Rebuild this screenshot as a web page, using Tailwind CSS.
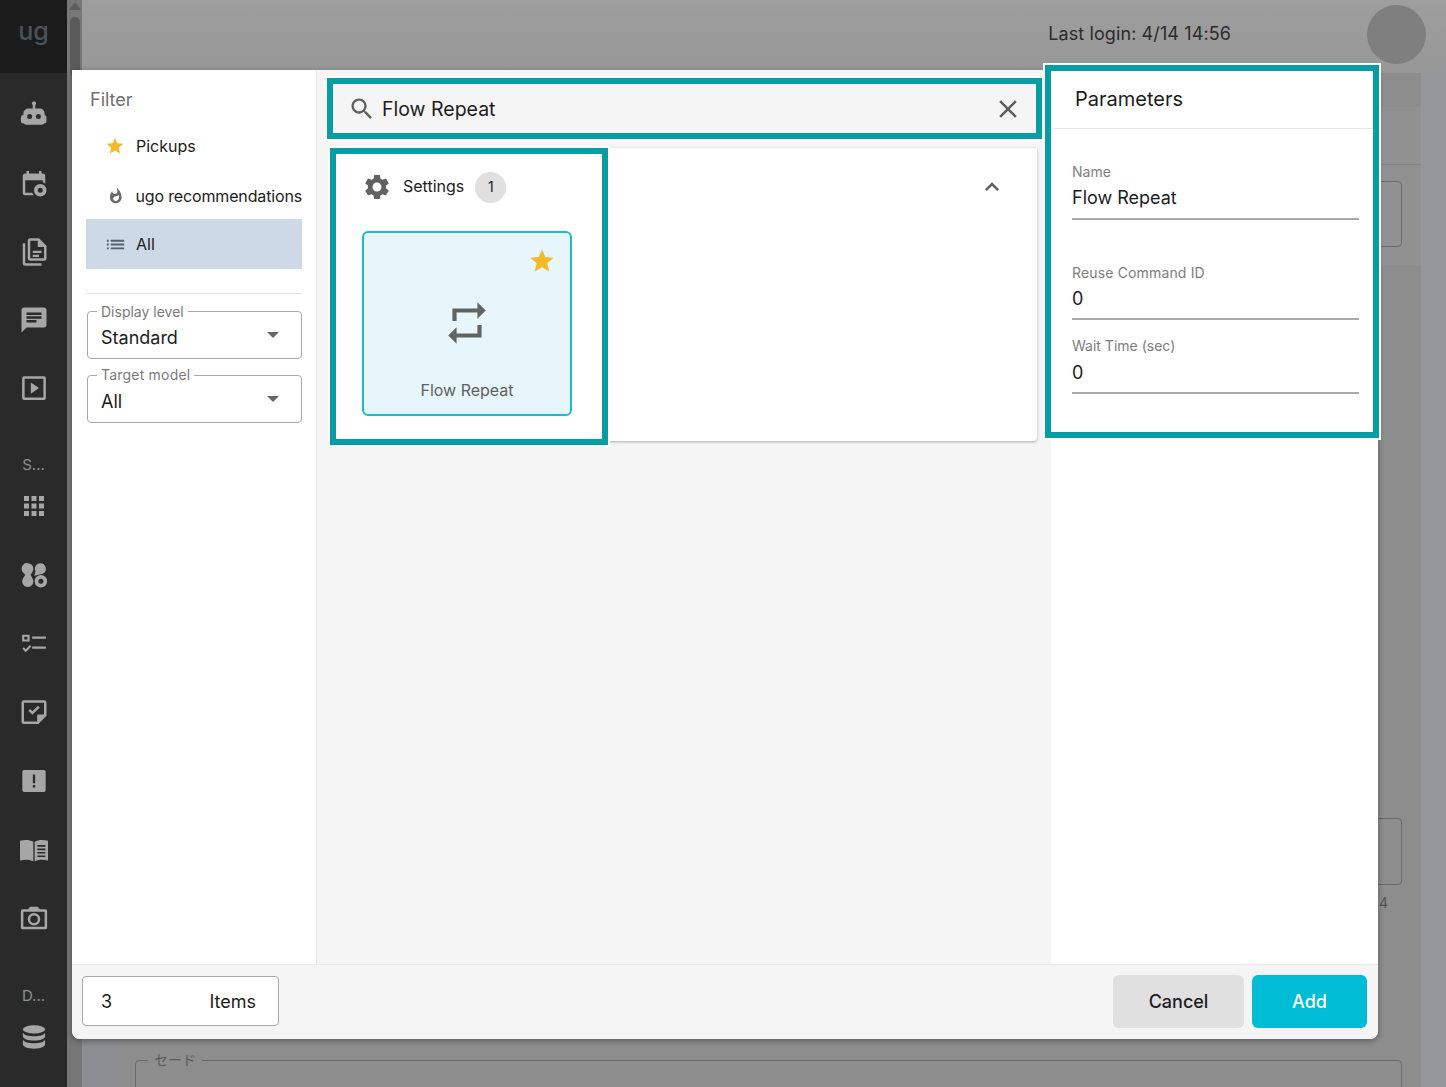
<!DOCTYPE html>
<html lang="en">
<head>
<meta charset="UTF-8">
<meta name="viewport" content="width=device-width, initial-scale=1.0">
<title>Add command</title>
<script src="https://cdn.jsdelivr.net/npm/@tailwindcss/browser@4"></script>
</head>
<body class="h-[1087px] w-[1446px] overflow-hidden bg-[#8d8d8d] font-['Inter','Noto_Sans_CJK_JP',sans-serif] text-[#1c1c1c]">

<!-- page behind the dialog -->
<div class="flex h-full">
  <aside class="flex h-full w-[67px] shrink-0 flex-col items-center bg-[#2a2a2a] text-[#a6a6a6]">
    <div class="flex h-[73px] w-full shrink-0 items-center justify-center bg-[#1b1b1b] pb-[10px] text-[25px] font-medium text-[#47525c]">ug</div>
    <div class="h-[9px] shrink-0"></div>
    <div class="flex h-[68px] shrink-0 items-center justify-center">
      <svg class="size-[30px]" viewBox="0 0 24 24" fill="currentColor"><path fill-rule="evenodd" d="M11 3.2a1.6 1.6 0 1 1 2 0V6h3.5a4 4 0 0 1 4 4v1.2a2 2 0 0 1 1.5 1.9v2.8a2 2 0 0 1-2 2H20a2 2 0 0 1-2 1.1H6A2 2 0 0 1 4 18H3.5a2 2 0 0 1-2-2v-2.9a2 2 0 0 1 2-1.9V10a4 4 0 0 1 4-4H11zM8.5 10.3a2 2 0 1 0 0 4 2 2 0 0 0 0-4zm7 0a2 2 0 1 0 0 4 2 2 0 0 0 0-4z"/></svg>
    </div>
    <div class="flex h-[68px] shrink-0 items-center justify-center">
      <svg class="size-[30px]" viewBox="0 0 24 24" fill="currentColor"><path fill-rule="evenodd" d="M6 1.5h2v2h8v-2h2v2h1a2 2 0 0 1 2 2v6.2a6 6 0 0 0-2-1.1V9H5v10h5.6a6 6 0 0 0 1.1 2H5a2 2 0 0 1-2-2V5.5a2 2 0 0 1 2-2h1zM17 12a5 5 0 1 1 0 10 5 5 0 0 1 0-10zm0 3a2 2 0 1 0 0 4 2 2 0 0 0 0-4z"/></svg>
    </div>
    <div class="flex h-[68px] shrink-0 items-center justify-center">
      <svg class="size-[30px]" viewBox="0 0 24 24" fill="currentColor"><path d="M16 1H9a2 2 0 0 0-2 2v14a2 2 0 0 0 2 2h11a2 2 0 0 0 2-2V7l-6-6zm4 16H9V3h6v5h5v9zM11 11h7v1.8h-7zm0 3.2h5V16h-5z"/><path d="M5 5H3v16a2 2 0 0 0 2 2h13v-2H5z"/></svg>
    </div>
    <div class="flex h-[68px] shrink-0 items-center justify-center">
      <svg class="size-[30px]" viewBox="0 0 24 24" fill="currentColor"><path d="M20 2H4c-1.1 0-1.99.9-1.99 2L2 22l4-4h14c1.1 0 2-.9 2-2V4c0-1.1-.9-2-2-2zM6 9h12v2H6V9zm8 5H6v-2h8v2zm4-6H6V6h12v2z"/></svg>
    </div>
    <div class="flex h-[68px] shrink-0 items-center justify-center">
      <svg class="size-[30px]" viewBox="0 0 24 24" fill="currentColor"><path fill-rule="evenodd" d="M4 2.5h16A1.5 1.5 0 0 1 21.5 4v16a1.5 1.5 0 0 1-1.5 1.5H4A1.5 1.5 0 0 1 2.5 20V4A1.5 1.5 0 0 1 4 2.5zm.5 2v15h15v-15zM9.5 7.5L16 12l-6.5 4.500z"/></svg>
    </div>
    <div class="flex h-[50px] w-full shrink-0 items-end justify-center text-[15px] leading-[14px] text-[#8f8f8f]">S...</div>
    <div class="flex h-[68.67px] shrink-0 items-center justify-center">
      <svg class="size-[30px]" viewBox="0 0 24 24" fill="currentColor"><path d="M4 8h4V4H4v4zm6 12h4v-4h-4v4zm-6 0h4v-4H4v4zm0-6h4v-4H4v4zm6 0h4v-4h-4v4zm6-10v4h4V4h-4zm-6 4h4V4h-4v4zm6 6h4v-4h-4v4zm0 6h4v-4h-4v4z"/></svg>
    </div>
    <div class="flex h-[68.67px] shrink-0 items-center justify-center">
      <svg class="size-[30px]" viewBox="0 0 24 24" fill="currentColor"><path fill-rule="evenodd" d="M7 2.5A4.5 4.5 0 0 1 11.500 7c0 1-.3 1.800-.8 2.500L9.300 12l1.400 2.500c.5.700.8 1.500.8 2.500a4.500 4.500 0 1 1-8.500-2L5 12 2.500 9A4.500 4.500 0 0 1 7 2.500zm10 0a4.500 4.500 0 0 1 2 8.500l-6.800 1.500 1-3.500A4.500 4.500 0 0 1 17 2.500zM17.500 12a5 5 0 1 1 0 10 5 5 0 0 1 0-10zm0 3a2 2 0 1 0 0 4 2 2 0 0 0 0-4z"/></svg>
    </div>
    <div class="flex h-[68.67px] shrink-0 items-center justify-center">
      <svg class="size-[30px]" viewBox="0 0 24 24" fill="currentColor"><path fill-rule="evenodd" d="M2.5 4.5h6V10h-6zm1.700 1.600v2.300h2.600V6.100zM10.500 6h11v1.700h-11zM10.500 14h11v1.700h-11zM2.700 15.800l1.200-1.200 1.500 1.500 3.300-3.300 1.200 1.200-4.500 4.500z"/></svg>
    </div>
    <div class="flex h-[68.67px] shrink-0 items-center justify-center">
      <svg class="size-[30px]" viewBox="0 0 24 24" fill="currentColor"><path fill-rule="evenodd" d="M4 2.5h16a2 2 0 0 1 2 2V15l-6.500 6.500H4a2 2 0 0 1-2-2v-15a2 2 0 0 1 2-2zm0 2v15h10.500V15a1 1 0 0 1 1-1H20V4.500zM7.500 11l1.400-1.400 1.800 1.800 4.500-4.500 1.400 1.400-5.900 5.900z"/></svg>
    </div>
    <div class="flex h-[68.67px] shrink-0 items-center justify-center">
      <svg class="size-[28px]" viewBox="0 0 24 24" fill="currentColor"><path fill-rule="evenodd" d="M3.5 2.5h17A1.500 1.500 0 0 1 22 4v16a1.500 1.500 0 0 1-1.500 1.500h-17A1.500 1.500 0 0 1 2 20V4a1.500 1.500 0 0 1 1.500-1.500zM11 6.500V14h2V6.500zM11 15.500v2h2v-2z"/></svg>
    </div>
    <div class="flex h-[68.67px] shrink-0 items-center justify-center">
      <svg class="size-[32px]" viewBox="0 0 24 24" fill="currentColor"><path fill-rule="evenodd" d="M1.5 5c3.500-.8 7.500-.8 10 .9v14.600c-2.500-1.500-6.500-1.500-10-.6zM12.500 5.900c2.500-1.700 6.500-1.700 10-.9v14.900c-3.500-.9-7.500-.9-10 .6zm2 2.400v1.200h6V8.300zm0 2.600v1.200h6v-1.200zm0 2.600v1.200h6v-1.200zm0 2.600v1.200h6v-1.200z"/></svg>
    </div>
    <div class="flex h-[68.67px] shrink-0 items-center justify-center">
      <svg class="size-[30px]" viewBox="0 0 24 24" fill="currentColor"><path fill-rule="evenodd" d="M9 3h6l1.800 2H21a1.500 1.500 0 0 1 1.500 1.500v13A1.500 1.500 0 0 1 21 21H3a1.500 1.500 0 0 1-1.500-1.500v-13A1.500 1.500 0 0 1 3 5h4.200zM3.500 7v12h17V7zM12 8a5 5 0 1 1 0 10 5 5 0 0 1 0-10zm0 2a3 3 0 1 0 0 6 3 3 0 0 0 0-6z"/></svg>
    </div>
    <div class="flex h-[50px] w-full shrink-0 items-end justify-center text-[15px] leading-[14px] text-[#8f8f8f]">D...</div>
    <div class="flex h-[68px] shrink-0 items-center justify-center">
      <svg class="size-[28px]" viewBox="0 0 24 24" fill="currentColor"><ellipse cx="12" cy="5.5" rx="9.5" ry="3.5"/><path d="M2.5 8.300c1 2 5 3 9.500 3s8.500-1 9.500-3v3.200c0 2-4.300 3.500-9.500 3.500s-9.500-1.500-9.500-3.500zM2.500 14.300c1 2 5 3 9.500 3s8.500-1 9.500-3v4.200c0 2-4.300 3.500-9.500 3.500s-9.500-1.500-9.500-3.500z"/></svg>
    </div>
  </aside>

  <div class="flex h-full w-[15px] shrink-0 flex-col items-center bg-[#777777]">
    <div class="mt-0.5 size-0 border-x-[6px] border-b-[8px] border-x-transparent border-b-[#5d5d5d]"></div>
    <div class="mt-[7px] h-[60px] w-[10px] rounded-full bg-[#5a5a5a]"></div>
  </div>

  <main class="flex h-full min-w-0 flex-1 flex-col">
    <header class="flex h-[73px] shrink-0 items-center justify-end gap-[136px] bg-linear-to-b from-[#9e9e9e] to-[#979797] pr-5 pb-[5px]">
      <span class="pb-px text-[18px] tracking-[0.1px] text-[#2b2b2b]">Last login: 4/14 14:56</span>
      <span class="size-[59px] rounded-full bg-[#7f7f7f]"></span>
    </header>
    <div class="flex min-h-0 flex-1 bg-[#8a8e92] pl-[33px]">
      <div class="flex min-w-0 flex-1 flex-col bg-[#8d8d8d] pt-[34px]">
        <div class="h-[58px] shrink-0 border-b border-[#858585] bg-[#919191]"></div>
        <div class="h-[100px] shrink-0 bg-[#919191] py-4 pr-[19px]">
          <div class="ml-auto h-[66px] w-[400px] rounded border border-[#6a6a6a]"></div>
        </div>
        <div class="h-[523px] shrink-0"></div>
        <div class="shrink-0 pt-[30px] pr-[19px]">
          <div class="ml-auto h-[67px] w-[400px] rounded border border-[#6a6a6a]"></div>
          <div class="mt-2 mr-[14px] text-right text-sm leading-5 text-[#555555]">4</div>
        </div>
        <div class="relative mt-[147px] mr-[19px] ml-5 h-[60px] shrink-0 rounded-t border border-[#6a6a6a]">
          <span class="absolute -top-[11px] left-3 bg-[#8d8d8d] px-1.5 text-sm leading-5 text-[#5c5c5c]">セード</span>
        </div>
      </div>
      <div class="w-[25px] shrink-0 bg-[#94979b]"></div>
    </div>
  </main>
</div>

<!-- dialog -->
<div class="absolute top-[70px] left-[72px] flex h-[969px] w-[1306px] flex-col overflow-hidden rounded-b-lg bg-white shadow-[0_2px_6px_rgba(0,0,0,0.35)]">
  <div class="flex min-h-0 flex-1">
    <aside class="flex w-[245px] shrink-0 flex-col border-r border-[#e6e6e6] px-[14px]">
      <div class="flex h-[58px] shrink-0 items-center pt-px pl-1 text-[18px] text-[#6f6f6f]">Filter</div>
      <div class="flex h-[36px] shrink-0 items-center gap-[11px] pl-[19px] text-[16px]">
        <svg class="size-[20px] text-[#f6b92b]" viewBox="0 0 24 24" fill="currentColor"><path d="M12 17.270L18.180 21l-1.640-7.030L22 9.240l-7.190-.61L12 2 9.190 8.630 2 9.240l5.460 4.730L5.820 21z"/></svg>
        <span>Pickups</span>
      </div>
      <div class="flex h-[50px] shrink-0 items-center whitespace-nowrap pt-[14px] pl-[21px] text-[16px]">
        <svg class="size-[18px] text-[#6a6a6a]" viewBox="0 0 24 24" fill="currentColor"><path d="M13.500.67s.74 2.650.74 4.800c0 2.060-1.350 3.730-3.410 3.730-2.070 0-3.630-1.670-3.630-3.730l.03-.36C5.210 7.510 4 10.620 4 14c0 4.420 3.580 8 8 8s8-3.580 8-8C20 8.610 17.410 3.800 13.500.67zM11.710 19c-1.780 0-3.220-1.400-3.220-3.140 0-1.620 1.050-2.760 2.810-3.120 1.770-.36 3.600-1.210 4.620-2.580.39 1.290.59 2.650.59 4.040 0 2.650-2.150 4.800-4.800 4.800z"/></svg>
        <span class="ml-[11px] tracking-[-0.15px]">ugo recommendations</span>
      </div>
      <div class="mt-[5px] flex h-[50px] shrink-0 items-center gap-[9px] bg-[#cdd9e6] pl-[18px] text-[16px]">
        <svg class="size-[23px] text-[#5a5f66]" viewBox="0 0 24 24" fill="currentColor"><path d="M3 13h2v-2H3v2zm0 4h2v-2H3v2zm0-8h2V7H3v2zm4 4h14v-2H7v2zm0 4h14v-2H7v2zM7 7v2h14V7H7z"/></svg>
        <span>All</span>
      </div>
      <div class="mt-6 h-px shrink-0 bg-[#e3e3e3]"></div>
      <div class="relative mt-[17px] ml-px flex h-[48px] shrink-0 items-center justify-between rounded border border-[#a8a8a8] pr-[22px] pl-[13px] text-[18px]">
        <span class="absolute -top-[9px] left-[9px] bg-white px-1 text-[14px] leading-[18px] text-[#7a7a7a]">Display level</span>
        <span class="pt-1">Standard</span>
        <span class="size-0 border-x-[6px] border-t-[6px] border-x-transparent border-t-[#666666]"></span>
      </div>
      <div class="relative mt-[16px] ml-px flex h-[48px] shrink-0 items-center justify-between rounded border border-[#a8a8a8] pr-[22px] pl-[13px] text-[18px]">
        <span class="absolute -top-[10px] left-[9px] bg-white px-1 text-[14px] leading-[18px] tracking-[0.2px] text-[#7a7a7a]">Target model</span>
        <span class="pt-1">All</span>
        <span class="size-0 border-x-[6px] border-t-[6px] border-x-transparent border-t-[#666666]"></span>
      </div>
    </aside>

    <section class="flex min-w-0 flex-1 flex-col bg-[#f5f5f5] pt-4 pr-[14px] pl-[18px]">
      <div class="flex h-[45px] shrink-0 items-center pr-[14px] pl-[13px] text-[19.5px]">
        <svg class="size-[28px] text-[#5f5f5f]" viewBox="0 0 24 24" fill="currentColor"><path d="M15.500 14h-.79l-.28-.27C15.410 12.590 16 11.110 16 9.500 16 5.910 13.090 3 9.500 3S3 5.910 3 9.500 5.910 16 9.500 16c1.610 0 3.090-.59 4.230-1.570l.27.28v.79l5 4.990L20.490 19l-4.990-5zm-6 0C7.010 14 5 11.990 5 9.500S7.010 5 9.500 5 14 7.010 14 9.500 11.990 14 9.500 14z"/></svg>
        <span class="ml-[6px] flex-1 pt-0.5">Flow Repeat</span>
        <svg class="size-[30px] text-[#5f5f5f]" viewBox="0 0 24 24" fill="currentColor"><path d="M19 6.410L17.590 5 12 10.590 6.410 5 5 6.410 10.590 12 5 17.590 6.410 19 12 13.410 17.590 19 19 17.590 13.410 12z"/></svg>
      </div>
      <div class="mt-[17px] h-[293px] shrink-0 rounded-b bg-white pt-[17px] pr-[31px] pl-[27px] shadow-[0_1px_3px_rgba(0,0,0,0.3)]">
        <div class="flex h-[44px] items-center">
          <svg class="size-[30px] text-[#616161]" viewBox="0 0 24 24" fill="currentColor"><path d="M19.140 12.940c.04-.3.06-.61.06-.94 0-.32-.02-.64-.07-.94l2.030-1.580c.18-.14.23-.41.12-.61l-1.920-3.320c-.12-.22-.37-.29-.59-.22l-2.390.96c-.5-.38-1.030-.7-1.620-.94l-.36-2.540c-.04-.24-.24-.41-.48-.41h-3.840c-.24 0-.43.17-.47.41l-.36 2.540c-.59.24-1.130.57-1.620.94l-2.390-.96c-.22-.08-.47 0-.59.22L2.740 8.870c-.12.21-.08.47.12.61l2.030 1.580c-.05.3-.09.63-.09.94s.02.64.07.94l-2.030 1.580c-.18.14-.23.41-.12.61l1.920 3.320c.12.22.37.29.59.22l2.390-.96c.5.38 1.030.7 1.620.94l.36 2.540c.05.24.24.41.48.41h3.840c.24 0 .44-.17.47-.41l.36-2.540c.59-.24 1.130-.56 1.620-.94l2.390.96c.22.08.47 0 .59-.22l1.920-3.320c.12-.22.07-.47-.12-.61l-2.010-1.580zM12 15.600c-1.980 0-3.600-1.620-3.600-3.600s1.620-3.600 3.600-3.600 3.600 1.620 3.600 3.600-1.620 3.600-3.600 3.600z"/></svg>
          <span class="ml-[11px] pb-0.5 text-[16px]">Settings</span>
          <span class="ml-[11px] flex size-[31px] items-center justify-center rounded-full bg-[#e0e0e0] pb-0.5 text-[14px]">1</span>
          <svg class="ml-auto size-[28px] text-[#5f5f5f]" viewBox="0 0 24 24" fill="currentColor"><path d="M12 8l-6 6 1.410 1.410L12 10.830l4.590 4.580L18 14z"/></svg>
        </div>
        <div class="relative mt-[22px] flex h-[185px] w-[210px] flex-col items-center rounded-md border-2 border-[#19bdd3] bg-[#e6f6fa]">
          <svg class="absolute top-[14px] right-[14px] size-[28px] text-[#f6b92b]" viewBox="0 0 24 24" fill="currentColor"><path d="M12 17.270L18.180 21l-1.640-7.030L22 9.240l-7.190-.61L12 2 9.190 8.630 2 9.240l5.460 4.730L5.820 21z"/></svg>
          <svg class="mt-[65px] size-[50px] text-[#636363]" viewBox="0 0 24 24" fill="currentColor"><path d="M7 7h10v3l4-4-4-4v3H5v6h2V7zm10 10H7v-3l-4 4 4 4v-3h12v-6h-2v4z"/></svg>
          <span class="mt-[30px] text-[16px] text-[#5f5f5f]">Flow Repeat</span>
        </div>
      </div>
    </section>

    <section class="w-[327px] shrink-0 bg-white">
      <div class="mx-[2px] flex h-[59px] items-center border-b border-[#e6e6e6] pl-[22px] text-[20px]">Parameters</div>
      <div class="pr-[19px] pl-[21px]">
        <div class="mt-[34px] text-[14px] leading-[18px] text-[#7d7d7d]">Name</div>
        <div class="mt-[5px] h-[34px] border-b-2 border-[#a9a9a9] text-[18px] leading-[24px]">Flow Repeat</div>
        <div class="mt-[44px] text-[14px] leading-[18px] tracking-[0.15px] text-[#7d7d7d]">Reuse Command ID</div>
        <div class="mt-[5px] h-[33px] border-b-2 border-[#a9a9a9] text-[18px] leading-[24px]">0</div>
        <div class="mt-[17px] text-[14px] leading-[18px] text-[#7d7d7d]">Wait Time (sec)</div>
        <div class="mt-[6px] h-[33px] border-b-2 border-[#a9a9a9] text-[18px] leading-[24px]">0</div>
      </div>
    </section>
  </div>

  <footer class="flex h-[75px] shrink-0 items-center justify-between border-t border-[#e8e8e8] bg-[#f5f5f5] px-[11px] pb-[2px]">
    <div class="-ml-px flex h-[50px] w-[197px] items-center justify-between rounded border border-[#a8a8a8] bg-white pr-[22px] pl-[18px] text-[18px]">
      <span>3</span><span>Items</span>
    </div>
    <div class="flex gap-2">
      <button class="h-[53px] w-[131px] rounded-md bg-[#e0e0e0] text-[18px] font-medium text-[#1c1c1c]">Cancel</button>
      <button class="h-[53px] w-[115px] rounded-md bg-[#00bcd4] text-[18px] font-medium text-white">Add</button>
    </div>
  </footer>
</div>

<!-- teal highlight frames drawn over the screenshot -->
<div class="absolute top-[78px] left-[327px] h-[61px] w-[715px] border-[6px] border-[#069ea2] shadow-[0_0_0_2px_#ffffff]"></div>
<div class="absolute top-[148px] left-[330px] h-[297px] w-[278px] border-[6px] border-[#069ea2] shadow-[0_0_0_2px_#ffffff]"></div>
<div class="absolute top-[65px] left-[1045px] h-[373px] w-[334px] border-[6px] border-[#069ea2] shadow-[0_0_0_2px_#ffffff]"></div>
</body>
</html>
